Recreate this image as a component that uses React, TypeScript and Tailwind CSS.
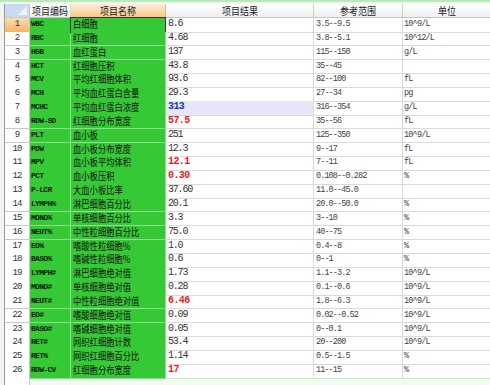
import React from "react";

type Row = {
  code: string;
  name: string;
  value: string;
  range: string;
  unit: string;
  flag?: "red" | "blue";
};

const rows: Row[] = [
  { code: "WBC", name: "白细胞", value: "8.6", range: "3.5--9.5", unit: "10^9/L" },
  { code: "RBC", name: "红细胞", value: "4.68", range: "3.8--5.1", unit: "10^12/L" },
  { code: "HGB", name: "血红蛋白", value: "137", range: "115--150", unit: "g/L" },
  { code: "HCT", name: "红细胞压积", value: "43.8", range: "35--45", unit: "" },
  { code: "MCV", name: "平均红细胞体积", value: "93.6", range: "82--100", unit: "fL" },
  { code: "MCH", name: "平均血红蛋白含量", value: "29.3", range: "27--34", unit: "pg" },
  { code: "MCHC", name: "平均血红蛋白浓度", value: "313", range: "316--354", unit: "g/L", flag: "blue" },
  { code: "RDW-SD", name: "红细胞分布宽度", value: "57.5", range: "35--56", unit: "fL", flag: "red" },
  { code: "PLT", name: "血小板", value: "251", range: "125--350", unit: "10^9/L" },
  { code: "PDW", name: "血小板分布宽度", value: "12.3", range: "9--17", unit: "fL" },
  { code: "MPV", name: "血小板平均体积", value: "12.1", range: "7--11", unit: "fL", flag: "red" },
  { code: "PCT", name: "血小板压积", value: "0.30", range: "0.108--0.282", unit: "%", flag: "red" },
  { code: "P-LCR", name: "大血小板比率", value: "37.60", range: "11.0--45.0", unit: "" },
  { code: "LYMPH%", name: "淋巴细胞百分比", value: "20.1", range: "20.0--50.0", unit: "%" },
  { code: "MONO%", name: "单核细胞百分比", value: "3.3", range: "3--10", unit: "%" },
  { code: "NEUT%", name: "中性粒细胞百分比", value: "75.0", range: "40--75", unit: "%" },
  { code: "EO%", name: "嗜酸性粒细胞%", value: "1.0", range: "0.4--8", unit: "%" },
  { code: "BASO%", name: "嗜碱性粒细胞%", value: "0.6", range: "0--1", unit: "%" },
  { code: "LYMPH#", name: "淋巴细胞绝对值", value: "1.73", range: "1.1--3.2", unit: "10^9/L" },
  { code: "MONO#", name: "单核细胞绝对值", value: "0.28", range: "0.1--0.6", unit: "10^9/L" },
  { code: "NEUT#", name: "中性粒细胞绝对值", value: "6.46", range: "1.8--6.3", unit: "10^9/L", flag: "red" },
  { code: "EO#", name: "嗜酸细胞绝对值", value: "0.09", range: "0.02--0.52", unit: "10^9/L" },
  { code: "BASO#", name: "嗜碱细胞绝对值", value: "0.05", range: "0--0.1", unit: "10^9/L" },
  { code: "RET#", name: "网织红细胞计数", value: "53.4", range: "20--200", unit: "10^9/L" },
  { code: "RET%", name: "网织红细胞百分比", value: "1.14", range: "0.5--1.5", unit: "%" },
  { code: "RDW-CV", name: "红细胞分布宽度", value: "17", range: "11--15", unit: "%", flag: "red" },
];

// column widths: 行号 | 编码 | 名称 | 结果 | 范围 | 单位
const cols = "grid grid-cols-[25px_41px_95px_148px_89px_100px]";

export default function App() {
  return (
    <div className="w-[490px] h-[385px] overflow-hidden bg-white font-['Noto_Sans_CJK_SC',sans-serif]">
      <div className="h-[2px] bg-[#b6eab6]" />
      <div className="h-[2px] bg-[#f4f4f4]" />

      <div className="pl-[4px] bg-[#f4f4f4]">
        <div className="border-l border-[#9a9a9a] bg-white">
          {/* header */}
          <div className={`${cols} h-[14px] border-b border-[#c4c4c4] text-[10px] leading-[13px] text-[#222]`}>
            <div className="relative border-r border-[#b8c8dc] bg-[#c9dbf0]">
              <svg className="absolute right-[2px] bottom-[2px]" width="9" height="9" viewBox="0 0 9 9">
                <polygon points="9,0 9,9 0,9" fill="#eef3fa" />
              </svg>
            </div>
            <div className="overflow-hidden whitespace-nowrap border-r border-[#bfe8bf] bg-linear-to-b from-white to-[#efefef] pl-[2px]">
              <span className="inline-block origin-left scale-x-[0.9]">项目编码</span>
            </div>
            <div className="border-r border-[#e8b878] bg-linear-to-b from-[#fdeeda] to-[#f8c684] text-center">
              <span className="inline-block scale-x-[0.9]">项目名称</span>
            </div>
            <div className="border-r border-[#b2e6b2] bg-linear-to-b from-white to-[#efefef] text-center">
              <span className="inline-block scale-x-[0.9]">项目结果</span>
            </div>
            <div className="border-r border-[#b2e6b2] bg-linear-to-b from-white to-[#efefef] text-center">
              <span className="inline-block scale-x-[0.9]">参考范围</span>
            </div>
            <div className="bg-linear-to-b from-white to-[#efefef] pr-[12px] text-center">
              <span className="inline-block scale-x-[0.9]">单位</span>
            </div>
          </div>

          {/* body */}
          {rows.map((r, i) => (
            <div key={i} className={`${cols} h-[13.85px] text-[9px] leading-[12.5px]`}>
              <div
                className={`border-r border-b border-[#c8c8c8] text-center font-['Liberation_Mono',monospace] tracking-[-1px] text-[#333] ${
                  i === 0 ? "bg-linear-to-b from-[#fcdcae] to-[#f5b466]" : "bg-white"
                }`}
              >
                {i + 1}
              </div>
              <div className="overflow-hidden whitespace-nowrap border-r border-b border-[#8fdc8f] bg-[#35c935] pl-[1px] font-['Liberation_Mono',monospace] text-[8px] font-bold tracking-[-0.7px] text-[#082008]">
                {r.code}
              </div>
              <div className="relative whitespace-nowrap border-r border-b border-[#8fdc8f] bg-[#35c935] pl-[2px] text-[#111]">
                <span className="inline-block origin-left scale-x-[0.83] text-[10px]">{r.name}</span>
                {i === 0 && <div className="absolute inset-[-1px] border border-[#3a3a3a]" />}
              </div>
              <div
                className={`border-r border-b border-[#dadada] pl-[2px] font-['Liberation_Mono',monospace] ${
                  r.flag === "red"
                    ? "font-bold text-[#f01818] tracking-[-0.6px] text-[10px]"
                    : r.flag === "blue"
                    ? "font-bold text-[#2236c8] tracking-[-0.6px] text-[10px] bg-[#e6e6f8]"
                    : "text-[#333] tracking-[-1.2px] text-[10px]"
                }`}
              >
                {r.value}
              </div>
              <div className="border-r border-b border-[#dadada] pl-[2px] font-['Liberation_Mono',monospace] text-[8.5px] tracking-[-0.9px] text-[#444]">
                {r.range}
              </div>
              <div className="border-b border-[#dadada] pl-[1px] font-['Liberation_Mono',monospace] text-[8.5px] tracking-[-0.8px] text-[#444]">
                {r.unit}
              </div>
            </div>
          ))}

          {/* empty area below */}
          <div className={`${cols} h-[10px]`}>
            <div className="border-r border-[#c8c8c8] bg-white" />
            <div className="col-span-5 mt-[1px] bg-[#effcef]" />
          </div>
        </div>
      </div>
    </div>
  );
}
